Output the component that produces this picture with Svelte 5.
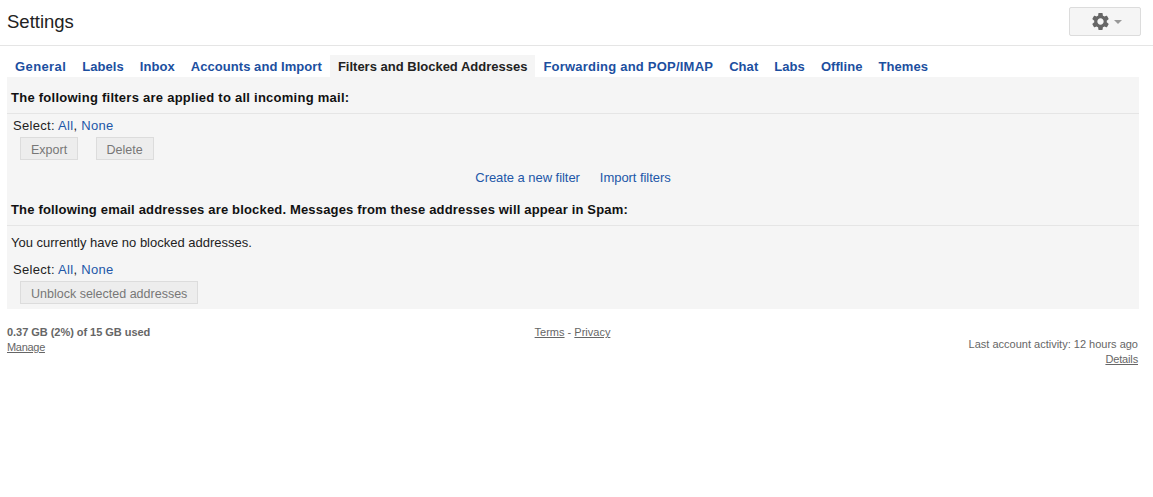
<script>
	const tabs = ['General', 'Labels', 'Inbox', 'Accounts and Import', 'Filters and Blocked Addresses', 'Forwarding and POP/IMAP', 'Chat', 'Labs', 'Offline', 'Themes'];
	const active = 'Filters and Blocked Addresses';
</script>

<div class="page">
	<header>
		<h1>Settings</h1>
		<button class="gear" aria-label="Settings menu">
			<svg width="21" height="21" viewBox="0 0 24 24" fill="#666">
				<path d="M19.140 12.940c.04-.3.06-.61.06-.94 0-.32-.02-.64-.07-.94l2.030-1.580c.18-.14.23-.41.12-.61l-1.920-3.320c-.12-.22-.37-.29-.59-.22l-2.390.96c-.5-.38-1.030-.7-1.620-.94l-.36-2.540c-.04-.24-.24-.41-.48-.41h-3.840c-.24 0-.43.17-.47.41l-.36 2.540c-.59.24-1.130.57-1.620.94l-2.390-.96c-.22-.08-.47 0-.59.22L2.740 8.870c-.12.21-.08.47.12.61l2.030 1.580c-.05.3-.09.63-.09.94s.02.64.07.94l-2.030 1.580c-.18.14-.23.41-.12.61l1.920 3.320c.12.22.37.29.59.22l2.390-.96c.5.38 1.030.7 1.620.94l.36 2.540c.05.24.24.41.48.41h3.840c.24 0 .44-.17.47-.41l.36-2.540c.59-.24 1.130-.56 1.620-.94l2.390.96c.22.08.47 0 .59-.22l1.920-3.320c.12-.22.07-.47-.12-.61l-2.010-1.580zM12 15.600c-1.980 0-3.600-1.620-3.600-3.600s1.620-3.600 3.600-3.600 3.600 1.620 3.600 3.600-1.620 3.600-3.600 3.600z"/>
			</svg>
			<span class="caret"></span>
		</button>
	</header>

	<nav>
		{#each tabs as tab}
			<a href="#top" class="tab" class:active={tab === active}>{tab}</a>
		{/each}
	</nav>

	<main>
		<h2>The following filters are applied to all incoming mail:</h2>
		<div class="select">Select: <a href="#top">All</a>, <a href="#top">None</a></div>
		<div class="buttons">
			<button disabled>Export</button>
			<button disabled>Delete</button>
		</div>
		<div class="actions">
			<a href="#top">Create a new filter</a>
			<a href="#top">Import filters</a>
		</div>
		<h2 class="second">The following email addresses are blocked. Messages from these addresses will appear in Spam:</h2>
		<p>You currently have no blocked addresses.</p>
		<div class="select">Select: <a href="#top">All</a>, <a href="#top">None</a></div>
		<div class="buttons">
			<button disabled>Unblock selected addresses</button>
		</div>
	</main>

	<footer>
		<div class="storage">
			<strong>0.37 GB (2%) of 15 GB used</strong>
			<a href="#top">Manage</a>
		</div>
		<div class="terms"><a href="#top">Terms</a> - <a href="#top">Privacy</a></div>
		<div class="activity">
			<span>Last account activity: 12 hours ago</span>
			<a href="#top">Details</a>
		</div>
	</footer>
</div>

<style>
	:global(body) {
		margin: 0;
		background: #fff;
		font-family: "Liberation Sans", Arial, sans-serif;
	}

	.page {
		height: 497px;
		overflow: hidden;
	}

	header {
		height: 45px;
		border-bottom: 1px solid #e5e5e5;
		display: flex;
		align-items: flex-start;
		justify-content: space-between;
		padding: 0 12px 0 7px;
	}

	h1 {
		margin: 11px 0 0;
		font-size: 18.5px;
		line-height: 22px;
		font-weight: 400;
		color: #222;
	}

	.gear {
		margin-top: 7px;
		width: 72px;
		height: 29px;
		padding: 0 0 0 1px;
		border: 1px solid #dcdcdc;
		border-radius: 2px;
		background: #f5f5f5;
		display: flex;
		align-items: center;
		justify-content: center;
		gap: 3px;
	}

	.caret {
		border: 4px solid transparent;
		border-top-color: #999;
		border-bottom: 0;
	}

	nav {
		display: flex;
		height: 22px;
		margin-top: 9px;
		padding-left: 7px;
	}

	.tab {
		padding: 1px 8px 0;
		font-size: 13px;
		line-height: 22px;
		font-weight: 700;
		letter-spacing: 0.06px;
		color: #1c4f9f;
		text-decoration: none;
		white-space: nowrap;
	}

	.tab:first-child {
		letter-spacing: 0.4px;
	}

	.tab:nth-child(6) {
		letter-spacing: 0.22px;
	}

	.tab.active {
		background: #f5f5f5;
		color: #222;
		letter-spacing: 0;
	}

	main {
		margin: 0 14px 0 7px;
		height: 232px;
		box-sizing: border-box;
		background: #f5f5f5;
		padding-top: 12px;
		font-size: 13px;
		color: #222;
	}

	main a {
		color: #2257a8;
		text-decoration: none;
	}

	h2 {
		margin: 0 0 4px;
		padding: 0 4px 7px;
		border-bottom: 1px solid #e5e5e5;
		font-size: 13px;
		line-height: 17px;
		font-weight: 700;
		letter-spacing: 0.255px;
		color: #111;
	}

	.select {
		padding-left: 6px;
		line-height: 15px;
		letter-spacing: 0.3px;
	}

	.buttons {
		display: flex;
		gap: 17.4px;
		padding: 4px 0 0 13px;
	}

	button:disabled {
		height: 23px;
		min-width: 58px;
		padding: 2px 10px 0;
		border: 1px solid #dcdcdc;
		background: #ededed;
		color: #777;
		font: 12.5px "Liberation Sans", Arial, sans-serif;
	}

	.actions {
		display: flex;
		justify-content: center;
		gap: 20px;
		margin-top: 10px;
		line-height: 16px;
		letter-spacing: -0.05px;
	}

	h2.second {
		margin-top: 15px;
		letter-spacing: 0.17px;
	}

	p {
		margin: 9px 0 12px;
		padding-left: 4px;
		line-height: 15px;
	}

	footer {
		display: grid;
		grid-template-columns: 1fr auto 1fr;
		padding: 16px 15px 0 7px;
		font-size: 11px;
		line-height: 15px;
		color: #666;
	}

	footer a {
		color: #666;
	}

	.storage {
		display: flex;
		flex-direction: column;
		align-items: flex-start;
	}

	.storage strong {
		letter-spacing: -0.04px;
	}

	.storage a {
		letter-spacing: -0.3px;
	}

	.activity {
		display: flex;
		flex-direction: column;
		align-items: flex-end;
		padding-top: 12px;
	}

	.activity a {
		letter-spacing: -0.15px;
	}
</style>
